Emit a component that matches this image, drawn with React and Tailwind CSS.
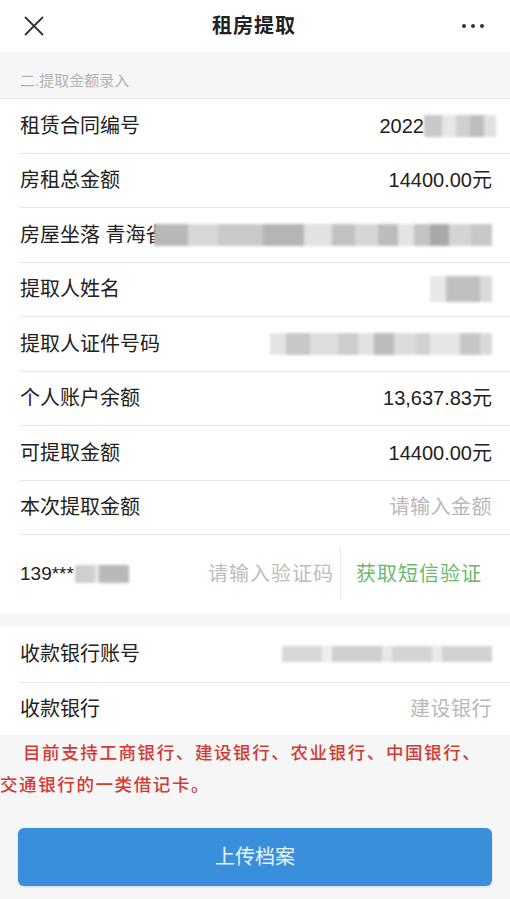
import React from 'react';

const font = { fontFamily: '"Liberation Sans", "Noto Sans CJK SC", sans-serif' };

// mosaic used to hide private values in the screenshot
const Mosaic = ({ blocks, className = '', h = 'h-[22px]' }) => (
  <div className={`flex items-center blur-[1.5px] ${h} ${className}`}>
    {blocks.map((b, i) => (
      <div key={i} className="h-full" style={{ flex: `${b[0]} 1 ${b[0]}px`, background: b[1] }} />
    ))}
  </div>
);

const Row = ({ label, children, last, h = 'h-[54.5px]' }) => (
  <div className={`flex items-center ${h} pr-[18px] ml-5 ${last ? '' : 'border-b border-[#e6e6e6]'}`}>
    <div className="text-[20px] text-[#222] whitespace-nowrap">{label}</div>
    <div className="flex-1 flex justify-end items-center text-[20px] text-[#222]">{children}</div>
  </div>
);

export default function App() {
  return (
    <div className="w-[510px] min-h-[899px] bg-[#f6f6f6]" style={font}>
      {/* Header */}
      <header className="h-[52px] bg-white flex items-center justify-between px-[22px]">
        <svg width="24" height="24" viewBox="0 0 24 24" className="text-[#333]">
          <path d="M3 3 L21 21 M21 3 L3 21" stroke="currentColor" strokeWidth="1.8" fill="none" />
        </svg>
        <h1 className="text-[20px] font-semibold text-[#222] tracking-[1px]">租房提取</h1>
        <div className="flex gap-[5px] pr-1">
          <span className="w-[4px] h-[4px] rounded-full bg-[#333]" />
          <span className="w-[4px] h-[4px] rounded-full bg-[#333]" />
          <span className="w-[4px] h-[4px] rounded-full bg-[#333]" />
        </div>
      </header>

      {/* Section title */}
      <div className="h-[47px] flex items-end pb-[6px] px-5 text-[15px] text-[#b3b3b3] border-b border-[#e8e8e8]">
        二.提取金额录入
      </div>

      <div className="bg-white">
        <Row label="租赁合同编号">
          <span>2022</span>
          <Mosaic
            className="w-[72px] -mr-[4px]"
            blocks={[[18, '#c8c8c8'], [14, '#e6e6e6'], [14, '#d0d0d0'], [14, '#bdbdbd'], [12, '#e0e0e0']]}
          />
        </Row>
        <Row label="房租总金额">
          <span>14400.00元</span>
        </Row>
        <Row label="房屋坐落 青海省">
          <Mosaic
            className="flex-1 -ml-3"
            blocks={[[30, '#b8b8b8'], [26, '#d8d8d8'], [40, '#c9c9c9'], [36, '#b5b5b5'], [24, '#e2e2e2'], [20, '#c2c2c2'], [20, '#d6d6d6'], [18, '#bcbcbc'], [14, '#e4e4e4'], [14, '#c4c4c4'], [16, '#a8a8a8'], [20, '#d4d4d4'], [18, '#c8c8c8']]}
          />
        </Row>
        <Row label="提取人姓名">
          <Mosaic className="w-[62px]" h="h-[26px]" blocks={[[16, '#e8e8e8'], [34, '#c0c0c0'], [12, '#dadada']]} />
        </Row>
        <Row label="提取人证件号码">
          <Mosaic
            className="w-[222px]"
            blocks={[[16, '#e4e4e4'], [24, '#c8c8c8'], [28, '#dedede'], [20, '#cdcdcd'], [16, '#e2e2e2'], [20, '#bcbcbc'], [22, '#dcdcdc'], [14, '#d0d0d0'], [30, '#e6e6e6'], [20, '#c6c6c6'], [12, '#d8d8d8']]}
          />
        </Row>
        <Row label="个人账户余额">
          <span>13,637.83元</span>
        </Row>
        <Row label="可提取金额">
          <span>14400.00元</span>
        </Row>
        <Row label="本次提取金额">
          <span className="text-[#b8b8b8] tracking-[0.5px]">请输入金额</span>
        </Row>
        {/* SMS verification */}
        <div className="flex items-center h-[78px] ml-5">
          <span className="text-[19px] text-[#222]">139***</span>
          <Mosaic className="w-[54px] ml-[1px]" h="h-[18px]" blocks={[[20, '#cfcfcf'], [4, '#e8e8e8'], [30, '#b8b8b8']]} />
          <span className="flex-1 text-right text-[20px] tracking-[1px] text-[#bdbdbd] pr-[6px]">请输入验证码</span>
          <div className="self-stretch my-[13px] w-px bg-[#e8e8e8]" />
          <span className="text-[20px] tracking-[1px] text-[#6cb86c] pl-[15px] pr-[28px]">获取短信验证</span>
        </div>
      </div>

      <div className="h-[13px]" />

      <div className="bg-white">
        <Row label="收款银行账号" h="h-[57px]">
          <Mosaic
            className="w-[210px]"
            h="h-[16px]"
            blocks={[[40, '#d8d8d8'], [10, '#eeeeee'], [50, '#cfcfcf'], [10, '#e8e8e8'], [40, '#d4d4d4'], [10, '#eaeaea'], [50, '#d2d2d2']]}
          />
        </Row>
        <Row label="收款银行" last h="h-[52px]">
          <span className="text-[#b8b8b8] tracking-[0.5px]">建设银行</span>
        </Row>
      </div>

      {/* notice */}
      <p className="text-[#d23a33] font-medium text-[17.5px] leading-[32px] tracking-[1.6px] indent-[23px] pt-[2px] pr-[14px]">
        目前支持工商银行、建设银行、农业银行、中国银行、交通银行的一类借记卡。
      </p>

      <div className="px-[18px] pt-[27px]">
        <button className="w-full h-[58px] rounded-[6px] bg-[#3a8fdc] text-white/90 text-[20px] shadow-sm">
          上传档案
        </button>
      </div>
    </div>
  );
}
